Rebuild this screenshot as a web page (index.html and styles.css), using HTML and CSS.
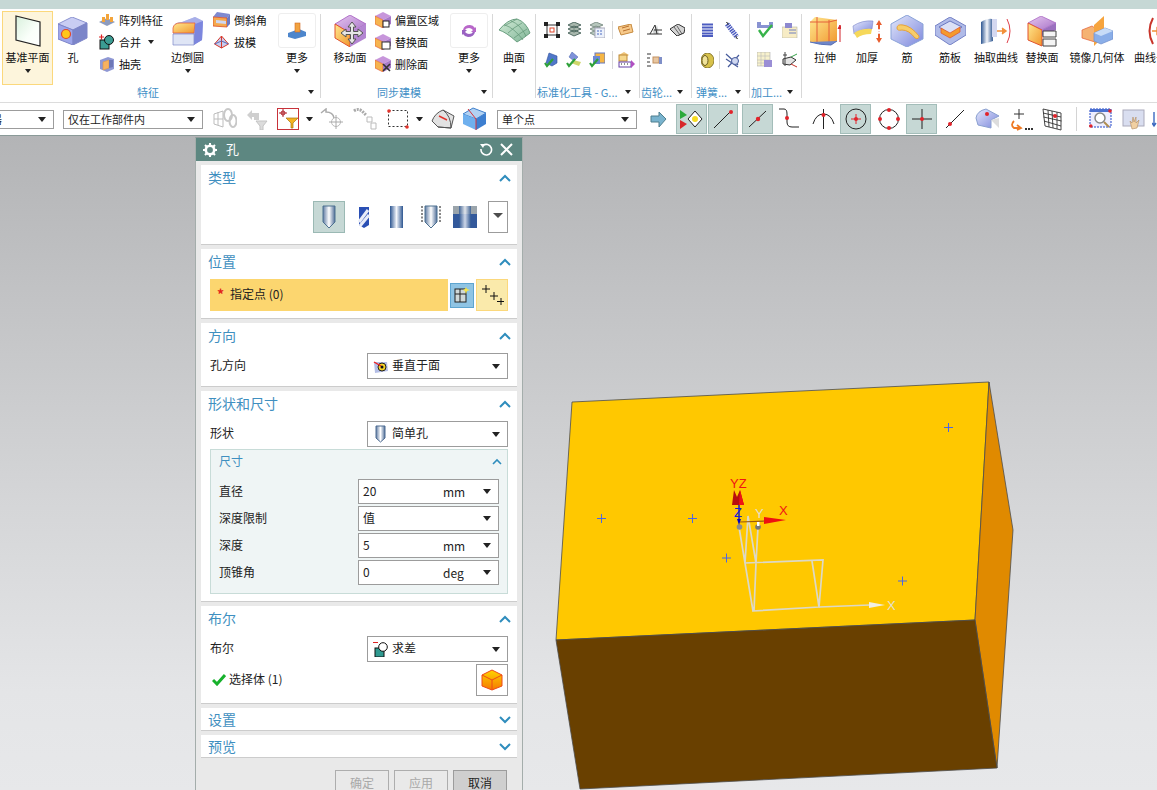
FILE: index.html
```html
<!DOCTYPE html>
<html lang="zh">
<head>
<meta charset="utf-8">
<title>孔</title>
<link rel="stylesheet" href="styles.css">
</head>
<body>
<svg class="defs" aria-hidden="true">
  <defs>
    <linearGradient id="gb" x1="0" y1="0" x2="1" y2="1"><stop offset="0" stop-color="#e4e8fb"/><stop offset="1" stop-color="#7b86dc"/></linearGradient>
    <linearGradient id="go" x1="0" y1="0" x2="1" y2="1"><stop offset="0" stop-color="#ffe88f"/><stop offset="1" stop-color="#f0962d"/></linearGradient>
    <linearGradient id="gd" x1="0" y1="0" x2="1" y2="1"><stop offset="0" stop-color="#d8f0dc"/><stop offset=".6" stop-color="#fafffa"/><stop offset="1" stop-color="#fff"/></linearGradient>
    <linearGradient id="gc" x1="0" y1="0" x2="1" y2="0"><stop offset="0" stop-color="#2c5590"/><stop offset=".5" stop-color="#f4f6fb"/><stop offset="1" stop-color="#2c5590"/></linearGradient>
    <linearGradient id="gs" x1="0" y1="0" x2="1" y2="0"><stop offset="0" stop-color="#5f7ba3"/><stop offset=".5" stop-color="#fff"/><stop offset="1" stop-color="#506e98"/></linearGradient>
    <linearGradient id="gf" x1="0" y1="0" x2="0" y2="1"><stop offset="0" stop-color="#ffd400"/><stop offset="1" stop-color="#f57a00"/></linearGradient>
    <linearGradient id="gv" x1="0" y1="0" x2="1" y2="1"><stop offset="0" stop-color="#e7c8ef"/><stop offset="1" stop-color="#a772c8"/></linearGradient>
    <linearGradient id="gsf" x1="0" y1="0" x2="1" y2="1"><stop offset="0" stop-color="#d4ecd8"/><stop offset="1" stop-color="#7fb596"/></linearGradient>
    <linearGradient id="gview" x1="0" y1="0" x2="0" y2="1"><stop offset="0" stop-color="#b3b4b6"/><stop offset=".55" stop-color="#d4d5d7"/><stop offset=".85" stop-color="#e4e5e7"/><stop offset="1" stop-color="#e7e8ea"/></linearGradient>
  </defs>
</svg>

<div class="strip"></div>

<header class="ribbon">
  <section class="group g-feature">
    <div class="group-body">
      <div class="big big-active w51">
        <div class="big-ico"><svg width="28" height="32" viewBox="0 0 28 32"><polygon points="2,1 26,7 26,31 2,25" fill="url(#gd)" stroke="#222" stroke-width="1.2"/></svg></div>
        <span class="big-label">基准平面</span><i class="tri"></i>
      </div>
      <div class="big w32 m4">
        <div class="big-ico"><svg width="30" height="28" viewBox="0 0 30 28"><polygon points="0,7 14,0 29,6 15,13" fill="#c9cdf3" stroke="#8b93d0"/><polygon points="0,7 15,13 15,28 0,22" fill="#9ea6ea" stroke="#7c84c8"/><polygon points="15,13 29,6 29,21 15,28" fill="#7b85c9" stroke="#7c84c8"/><circle cx="8" cy="17" r="4.5" fill="#ffc61c" stroke="#e2482d" stroke-width="1.2"/></svg></div>
        <span class="big-label">孔</span>
      </div>
      <div class="small-col w69 m10">
        <div class="small"><svg width="16" height="12" viewBox="0 0 16 12"><polygon points="0,8 8,4 16,8 8,12" fill="#8d9bbd"/><rect x="3" y="3" width="3" height="5" fill="#f3a43a"/><rect x="7" y="0" width="3" height="6" fill="#f3a43a"/><rect x="11" y="3" width="3" height="5" fill="#f3a43a"/></svg><span>阵列特征</span></div>
        <div class="small"><svg width="16" height="16" viewBox="0 0 16 16"><path d="M0 3h5M2.500 .5v5" stroke="#d22" stroke-width="1.200"/><rect x="1" y="6" width="9" height="9" fill="#3b9c93" stroke="#111"/><circle cx="10" cy="6" r="4.500" fill="#3b9c93" stroke="#111"/></svg><span>合并</span><i class="tri tri-inline"></i></div>
        <div class="small"><svg width="16" height="16" viewBox="0 0 16 16"><polygon points="1,4 9,1 15,3 15,13 8,16 1,13" fill="#8f98d4"/><polygon points="4,6 10,4 10,12 4,14" fill="#f7b260" stroke="#d94" stroke-width=".6"/><polygon points="10,4 14,4 14,11 10,12" fill="#6e77b6"/></svg><span>抽壳</span></div>
      </div>
      <div class="big w35 m2">
        <div class="big-ico"><svg width="32" height="30" viewBox="0 0 32 30"><path d="M1 12Q2 6 10 6L23 1l8 4-1 19-9 5H1z" fill="url(#gb)"/><path d="M1 12Q2 6 10 6L23 1l8 4-8 3Q8 8 8 8 2 8 1 12z" fill="#a8afe8"/><path d="M1 12Q2 7 8 7h15l-1 10H1z" fill="url(#go)" stroke="#e8603a" stroke-width=".8"/><path d="M23 8l8-3-1 19-8 5z" fill="#7c86de"/><path d="M1 18h21v11H1z" fill="#dfe5f5" stroke="#7d87c8" stroke-width=".7"/></svg></div>
        <span class="big-label">边倒圆</span><i class="tri"></i>
      </div>
      <div class="small-col w59 m8">
        <div class="small s2"><svg width="17" height="16" viewBox="0 0 17 16"><polygon points="0,5 4,0 17,2 14,6" fill="#7f8ad0"/><polygon points="0,5 14,6 14,15 0,14" fill="#f5a94e" stroke="#d94c2a" stroke-width=".8"/><polygon points="3,8 13,9 13,12 3,11" fill="#cfd7f2"/><polygon points="14,6 17,2 17,12 14,15" fill="#6d79c1"/></svg><span>倒斜角</span></div>
        <div class="small s2"><svg width="16" height="13" viewBox="0 0 16 13"><polygon points="8,0 15,8 8,12 1,8" fill="#c6cdf0" stroke="#d8392b"/><path d="M8 0v12" stroke="#d8392b"/><path d="M1 8l7-3 7 3" fill="none" stroke="#5a68b5"/></svg><span>拔模</span></div>
      </div>
      <div class="big w38 m6">
        <div class="more-box"><svg width="18" height="17" viewBox="0 0 18 17"><polygon points="0,11 11,7 18,10 18,14 7,17 0,15" fill="#4d86cc"/><rect x="7" y="1" width="5" height="9" fill="#f1a340" stroke="#d46a20" stroke-width=".6"/></svg></div>
        <span class="big-label">更多</span><i class="tri"></i>
      </div>
    </div>
    <div class="group-label center"><span>特征</span><i class="tri"></i></div>
  </section>
  <i class="sep"></i>

  <section class="group g-sync">
    <div class="group-body">
      <div class="big w34">
        <div class="big-ico"><svg width="33" height="32" viewBox="0 0 33 32"><polygon points="1,9 16,0 32,9 16,18" fill="url(#gv)" stroke="#a55ac0" stroke-width=".8"/><polygon points="1,9 16,18 16,32 1,23" fill="url(#go)" stroke="#e0522d"/><polygon points="16,18 32,9 32,23 16,32" fill="#b486d2"/><path d="M18 7l4 5h-2.500v4.500H24V14l5 4-5 4v-2.500h-4.500V24H22l-4 5-4-5h2.500v-4.500H12V22l-5-4 5-4v2.500h4.500V12H14z" fill="#e6e6e6" stroke="#555"/></svg></div>
        <span class="big-label">移动面</span>
      </div>
      <div class="small-col w70 m8">
        <div class="small"><svg width="16" height="16" viewBox="0 0 16 16"><polygon points="0,4 8,0 16,4 8,8" fill="#c796db"/><polygon points="0,4 8,8 8,16 0,12" fill="#f6b44f" stroke="#e0522d" stroke-width=".6"/><polygon points="8,8 16,4 16,12 8,16" fill="#a67ac8"/><rect x="8" y="9" width="6" height="6" fill="#fff" stroke="#222"/></svg><span>偏置区域</span></div>
        <div class="small"><svg width="16" height="16" viewBox="0 0 16 16"><polygon points="0,4 8,0 16,4 8,8" fill="#c796db"/><polygon points="0,4 8,8 8,16 0,12" fill="#f6b44f" stroke="#e0522d" stroke-width=".6"/><polygon points="8,8 16,4 16,12 8,16" fill="#a67ac8"/><rect x="7" y="8" width="8" height="7" fill="#fff" stroke="#333"/></svg><span>替换面</span></div>
        <div class="small"><svg width="16" height="16" viewBox="0 0 16 16"><polygon points="0,4 8,0 16,4 8,8" fill="#c796db"/><polygon points="0,4 8,8 8,16 0,12" fill="#f6b44f" stroke="#e0522d" stroke-width=".6"/><polygon points="8,8 16,4 16,12 8,16" fill="#a67ac8"/><path d="M8 8l7 7M15 8l-7 7" stroke="#333" stroke-width="1.600"/></svg><span>删除面</span></div>
      </div>
      <div class="big w38 m5">
        <div class="more-box"><svg width="16" height="14" viewBox="0 0 16 14"><path d="M2 6Q3 1 9 1q3 0 5 3l1-1v5H10l2-2Q10 4 8 4 5 4 4 6z" fill="#b867c9"/><path d="M14 8q-1 5-7 5-3 0-5-3l-1 1V6h5L4 8q2 2 4 2 3 0 4-2z" fill="#9a62c2"/></svg></div>
        <span class="big-label">更多</span><i class="tri"></i>
      </div>
    </div>
    <div class="group-label center2"><span>同步建模</span><i class="tri"></i></div>
  </section>
  <i class="sep"></i>

  <section class="group g-surface">
    <div class="group-body">
      <div class="big w42">
        <div class="big-ico"><svg width="33" height="26" viewBox="0 0 33 26"><path d="M1 12Q10 1 19 1q9 3 13 14-6 5-13 9Q8 14 1 12z" fill="url(#gsf)" stroke="#6a9f80"/><path d="M7 7q9 3 18 15M13 3q9 3 15 15M19 1q-9 5-13 7M24 5q-9 5-14 10M29 11q-8 5-13 9" fill="none" stroke="#5e9474" stroke-width=".7"/></svg></div>
        <span class="big-label">曲面</span><i class="tri"></i>
      </div>
    </div>
    <div class="group-label"></div>
  </section>
  <i class="sep"></i>

  <section class="group g-std">
    <div class="tool-grid grid-std">
      <svg width="16" height="16" viewBox="0 0 16 16"><rect x="3" y="3" width="10" height="10" fill="none" stroke="#333"/><rect x="6" y="6" width="4" height="4" fill="#fff" stroke="#e0462d"/><path d="M0 0h4v4H0zM12 0h4v4h-4zM0 12h4v4H0zM12 12h4v4h-4z" fill="#222"/></svg>
      <svg width="15" height="16" viewBox="0 0 15 16"><path d="M1 3l6-3 7 3-7 3zM1 7l6-3 7 3-7 3zM1 11l6-3 7 3-7 3z" fill="#a8b7ad" stroke="#35534a" stroke-width=".8"/></svg>
      <svg width="16" height="16" viewBox="0 0 16 16"><path d="M1 3l6-3 7 3-7 3zM1 7l6-3 7 3-7 3zM1 11l6-3 7 3-7 3z" fill="#b7c7bd" stroke="#6f8279" stroke-width=".8"/><rect x="6" y="6" width="10" height="10" fill="#ecf1fb" stroke="#aab"/><path d="M8 9h6M8 12h6" stroke="#4d6ac0" stroke-dasharray="2 1"/></svg>
      <i class="vsep"></i>
      <svg width="16" height="12" viewBox="0 0 16 12"><polygon points="0,3 13,0 15,8 3,11" fill="#f7c98a" stroke="#c68a3f"/><path d="M4 4l7-2M5 7l7-2" stroke="#b8702e"/></svg>
      <svg width="16" height="16" viewBox="0 0 16 16"><path d="M5 1l8 3v7l-5 3-6-3z" fill="#4f77c9" stroke="#2f4f9b" stroke-width=".6"/><path d="M1 11l2 3 6-7" fill="none" stroke="#2ea13a" stroke-width="2.200"/></svg>
      <svg width="16" height="16" viewBox="0 0 16 16"><path d="M6 0l6 5-4 4-5-4z" fill="#7f92da" stroke="#4560aa" stroke-width=".5"/><path d="M7 8l8 2-2 4-8-3z" fill="#cfd66c"/><path d="M1 11l2 3 6-7" fill="none" stroke="#2ea13a" stroke-width="2.200"/></svg>
      <svg width="16" height="16" viewBox="0 0 16 16"><rect x="6" y="1" width="10" height="10" fill="#f5b544" stroke="#6378c3"/><rect x="4" y="4" width="7" height="8" fill="#6c88d4"/><path d="M1 11l2 3 6-7" fill="none" stroke="#2ea13a" stroke-width="2.200"/></svg>
      <i class="vsep"></i>
      <svg width="17" height="16" viewBox="0 0 17 16"><path d="M1 3l5-3 5 3-5 3z" fill="#eec47a"/><rect x="1" y="3" width="8" height="6" fill="#f6d78c" stroke="#bd8a3a"/><rect x="1" y="10" width="12" height="5" fill="#fff" stroke="#6640a8"/><path d="M3 12h1M6 12h1M9 12h1" stroke="#222"/><polygon points="13,8 17,12 13,16" fill="#b14fc2"/></svg>
    </div>
    <div class="group-label"><span class="flex1">标准化工具 - G...</span><i class="tri"></i></div>
  </section>
  <i class="sep"></i>

  <section class="group g-gear">
    <div class="tool-grid grid-two">
      <svg width="16" height="12" viewBox="0 0 16 12"><path d="M5 6q4-1 5-5l2 9H7z" fill="#cfd2d2"/><path d="M0 10h15M3 10L8 1l2 9M7 6h8" fill="none" stroke="#333"/></svg>
      <svg width="16" height="12" viewBox="0 0 16 12"><path d="M1 5l8-5 7 4-1 5-7 3z" fill="#d4d4d4" stroke="#333"/><path d="M5 3l6 8M8 2l5 8" stroke="#333" stroke-width=".7"/></svg>
      <svg width="16" height="15" viewBox="0 0 16 15"><path d="M0 1h4M0 5h3M0 9h3M0 13h4" stroke="#333"/><rect x="6" y="4" width="6" height="6" fill="#e8c6a0" stroke="#c19060"/><rect x="12" y="4" width="3" height="7" fill="#7f8fc8"/></svg>
    </div>
    <div class="group-label"><span class="flex1">齿轮...</span><i class="tri"></i></div>
  </section>
  <i class="sep"></i>

  <section class="group g-spring">
    <div class="tool-grid grid-spring">
      <svg width="13" height="14" viewBox="0 0 13 14"><rect width="13" height="14" fill="#fff"/><path d="M1 1.500h11M1 4.500h11M1 7.500h11M1 10.500h11M1 13h11" stroke="#4c5cc0" stroke-width="1.800"/></svg>
      <i></i>
      <svg width="14" height="17" viewBox="0 0 14 17"><path d="M2 2l10 13" stroke="#4c5cc0" stroke-width="5" stroke-dasharray="1.500 .8"/><path d="M1 0q2 0 2 3M13 17q-2 0-2-3" fill="none" stroke="#333"/></svg>
      <svg width="13" height="15" viewBox="0 0 13 15"><ellipse cx="6.500" cy="7.500" rx="6.500" ry="7.500" fill="#d7c14a" stroke="#8a7a30"/><ellipse cx="4" cy="7.500" rx="3" ry="5" fill="#f0e39a" stroke="#6a5c20"/></svg>
      <i class="vsep short"></i>
      <svg width="15" height="15" viewBox="0 0 15 15"><path d="M1 1l12 11M1 6l12 8M3 14l11-12" stroke="#465a9b" stroke-width="1.200"/><circle cx="10" cy="8" r="3.500" fill="#cfd7f0" stroke="#465a9b"/></svg>
    </div>
    <div class="group-label"><span class="flex1">弹簧...</span><i class="tri"></i></div>
  </section>
  <i class="sep"></i>

  <section class="group g-mach">
    <div class="tool-grid grid-mach">
      <svg width="16" height="16" viewBox="0 0 16 16"><path d="M0 0h4v3h8V0h4v6H0z" fill="#8993d2"/><path d="M2 8l4 6 9-11" fill="none" stroke="#37b34a" stroke-width="2.400"/></svg>
      <svg width="16" height="16" viewBox="0 0 16 16"><rect x="0" y="5" width="15" height="11" fill="#f7ecc5" stroke="#b5b5a5" stroke-width=".6"/><rect x="3" y="1" width="7" height="5" fill="#8d89cf"/><path d="M7 8h7M7 11h7" stroke="#6e7fbf"/></svg>
      <svg width="16" height="16" viewBox="0 0 16 16"><rect width="13" height="14" fill="#f7f1cc" stroke="#aaa" stroke-width=".6"/><path d="M0 4h13M0 8h13M0 11h13M4 0v14M8 0v14" stroke="#bbb" stroke-width=".6"/><rect x="7" y="8" width="8" height="7" fill="#9a8ed5"/></svg>
      <svg width="16" height="16" viewBox="0 0 16 16"><path d="M1 7l8-2 5 3-6 5-7-1z" fill="#e4e4e4" stroke="#333"/><path d="M3 0v14M1 3h4" stroke="#444"/><path d="M9 5l6-3" stroke="#37a34a"/><path d="M9 12l6 3" stroke="#c8342a"/></svg>
    </div>
    <div class="group-label"><span class="flex1">加工...</span><i class="tri"></i></div>
  </section>
  <i class="sep"></i>

  <section class="group g-big">
    <div class="group-body">
      <div class="big w46">
        <div class="big-ico"><svg width="32" height="30" viewBox="0 0 32 30"><polygon points="1,6 6,1 28,4 28,25 22,29 1,26" fill="url(#go)"/><path d="M8 1v25M20 4v25M1 6h19l8-2" fill="none" stroke="#e4603a"/><path d="M1 26q10 3 21 3l6-4" fill="#6f86c8" stroke="#5670b8"/><path d="M31 26V11M29 13l2-4 1 4" stroke="#d2232a" fill="#d2232a"/></svg></div>
        <span class="big-label">拉伸</span>
      </div>
      <div class="big w38">
        <div class="big-ico"><svg width="30" height="26" viewBox="0 0 30 26"><path d="M1 8Q10 2 21 3l-1 8Q10 10 2 16z" fill="url(#gb)" stroke="#7a84c9" stroke-width=".6"/><path d="M2 15Q10 10 20 11l-1 5Q10 16 5 20z" fill="#f6d85a"/><path d="M27 2l3 5h-2v4h-2V7h-2zM27 25l3-5h-2v-4h-2v4h-2z" fill="#e85e2f"/><path d="M27 11v5" stroke="#e7a0a0" stroke-dasharray="1 1"/></svg></div>
        <span class="big-label">加厚</span>
      </div>
      <div class="big w42">
        <div class="big-ico"><svg width="34" height="32" viewBox="0 0 34 32"><polygon points="17,0 33,9 33,24 17,32 1,24 1,9" fill="url(#gb)" stroke="#8aa3d8"/><path d="M7 13q0-4 6-3 8 1 16 11 0 4-4 2-6-8-13-8-5 1-5-2z" fill="#f7cd6a" stroke="#e6a23a"/></svg></div>
        <span class="big-label">筋</span>
      </div>
      <div class="big w44">
        <div class="big-ico"><svg width="31" height="28" viewBox="0 0 31 28"><polygon points="15,0 31,9 31,18 15,28 0,18 0,9" fill="#b0bbe8" stroke="#7480c5"/><polygon points="15,4 27,10 15,17 4,10" fill="#dbe0f5" stroke="#6a78c0"/><path d="M6 11l9 5 10-6v5l-10 6-9-5z" fill="#f59a2c" stroke="#e0522d" stroke-width=".7"/></svg></div>
        <span class="big-label">筋板</span>
      </div>
      <div class="big w48">
        <div class="big-ico"><svg width="32" height="28" viewBox="0 0 32 28"><path d="M1 5Q8 1 12 2l1 22Q8 26 1 27z" fill="url(#gc)"/><rect x="12" y="2" width="5" height="18" fill="#d4d8f0"/><path d="M17 14h8M22 11l4 3-4 3" fill="#f2903a" stroke="#f2903a" stroke-width="1.500"/><path d="M27 2q6 12 0 24" fill="none" stroke="#df3f4a"/></svg></div>
        <span class="big-label">抽取曲线</span>
      </div>
      <div class="big w44">
        <div class="big-ico"><svg width="30" height="31" viewBox="0 0 30 31"><polygon points="1,7 14,0 29,7 15,14" fill="url(#gv)" stroke="#a45bbf" stroke-width=".7"/><polygon points="1,7 15,14 15,30 1,24" fill="url(#go)" stroke="#e2522d"/><polygon points="15,14 29,7 29,14 15,20" fill="#9b70bf"/><path d="M16 15h13v6H16zM16 23h13v7H16z" fill="#f4f4f4" stroke="#444"/></svg></div>
        <span class="big-label">替换面</span>
      </div>
      <div class="big w66">
        <div class="big-ico"><svg width="32" height="30" viewBox="0 0 32 30"><polygon points="1,14 11,10 14,12 14,26 1,22" fill="#f5b272" stroke="#e25c32" stroke-width=".7"/><polygon points="13,9 23,0 23,20 13,30" fill="#f6a43e"/><polygon points="13,17 24,12 32,15 32,23 20,28 13,25" fill="#8aaee8" stroke="#6f8dcc" stroke-width=".7"/><polygon points="13,17 24,12 32,15 20,20" fill="#c8dcf7"/></svg></div>
        <span class="big-label">镜像几何体</span>
      </div>
      <div class="big w52">
        <div class="big-ico"><svg width="22" height="28" viewBox="0 0 22 28"><path d="M8 1Q1 14 8 27" fill="none" stroke="#c8342a" stroke-width="2"/><path d="M7 14h8M12 11l4 3-4 3z" fill="#f2903a" stroke="#f2903a" stroke-width="1.400"/></svg></div>
        <span class="big-label">曲线长度</span>
      </div>
    </div>
  </section>
</header>

<nav class="toolbar">
  <div class="select s-first"><span class="grow">器</span><i class="caret"></i></div>
  <div class="select s-scope m9"><span class="grow">仅在工作部件内</span><i class="caret"></i></div>
  <svg class="m10" width="24" height="22" viewBox="0 0 24 22"><path d="M1 6l9-3v16l-9-3zM1 11h9M5 4v13" fill="none" stroke="#bdbdbd"/><ellipse cx="15" cy="7" rx="4" ry="6" fill="none" stroke="#c8c8c8" stroke-width="2"/><ellipse cx="20" cy="13" rx="3.500" ry="6" fill="none" stroke="#c8c8c8" stroke-width="2"/></svg>
  <svg class="m9" width="22" height="22" viewBox="0 0 22 22"><path d="M1 7l5-5v3h7v7H8V9H6v3z" fill="#cfcfcf"/><path d="M10 13h11l-4 5v4h-3v-4z" fill="#dcdcdc" stroke="#c4c4c4"/></svg>
  <div class="filter m9"><svg width="20" height="20" viewBox="0 0 20 20"><path d="M1 4h8M5 0v8" stroke="#b0232a"/><circle cx="5" cy="4" r="2" fill="none" stroke="#b0232a"/><path d="M8 9h12l-5 5v5h-2v-5z" fill="#f4b320" stroke="#a87412" stroke-width=".7"/></svg></div>
  <i class="caret m7"></i>
  <svg class="m7" width="24" height="22" viewBox="0 0 24 22"><path d="M1 5l5-4v3q7 0 8 6" fill="none" stroke="#aaa" stroke-width="1.500"/><circle cx="16" cy="14" r="4.500" fill="none" stroke="#bbb"/><path d="M16 7v14M9 14h14" stroke="#aaa"/></svg>
  <svg class="m8" width="26" height="22" viewBox="0 0 26 22"><path d="M2 3q4-3 8 0l4 4" fill="none" stroke="#aaa" stroke-width="3" stroke-dasharray="2 1"/><path d="M15 9h5v5h-5zM19 15h5v6h-5z" fill="none" stroke="#bbb"/></svg>
  <svg class="m9" width="22" height="22" viewBox="0 0 22 22"><rect x="1.500" y="2.500" width="19" height="16" fill="none" stroke="#333" stroke-dasharray="2 2"/><circle cx="2" cy="3" r="1.800" fill="#e2332c"/><circle cx="20" cy="19" r="1.800" fill="#e2332c"/></svg>
  <i class="caret m7"></i>
  <svg class="m8" width="24" height="22" viewBox="0 0 24 22"><path d="M1 13Q4 5 12 2l11 6-3 12-13-1z" fill="#e2e2e2" stroke="#555"/><path d="M1 13l6 6 13 1M12 2q8 6 8 18" fill="none" stroke="#555"/><path d="M8 8l8 4" stroke="#e2332c" stroke-width="1.500"/></svg>
  <svg class="m7" width="25" height="24" viewBox="0 0 25 24"><polygon points="1,7 11,1 24,6 14,12" fill="#b2d2f2" stroke="#3f80cc"/><polygon points="1,7 14,12 14,23 1,17" fill="#6fb0ee"/><polygon points="14,12 24,6 24,17 14,23" fill="#3d7fd0"/><path d="M6 2l8 10v11" fill="none" stroke="#d8343a"/></svg>
  <div class="select s-point m10"><span class="grow">单个点</span><i class="caret"></i></div>
  <svg class="m13" width="17" height="15" viewBox="0 0 17 15"><path d="M1 4h8V0l7 7-7 8v-5H1z" fill="#79b3ce" stroke="#4f7f8e"/></svg>
  <div class="on on31 m9"><svg width="26" height="20" viewBox="0 0 26 20"><polygon points="1,1 8,6 1,10" fill="#2aaa3c"/><polygon points="1,11 8,15 1,20" fill="#d8282a"/><polygon points="16,2 23,10 16,18 9,10" fill="#fff" stroke="#222"/><circle cx="16" cy="10" r="3" fill="#f6dc22"/></svg></div>
  <div class="on on30 m1"><svg width="22" height="20" viewBox="0 0 22 20"><path d="M2 19L19 2" stroke="#222"/><circle cx="19" cy="3" r="2" fill="#e2232a"/></svg></div>
  <div class="on on31 m4"><svg width="20" height="20" viewBox="0 0 20 20"><path d="M1 18L18 2" stroke="#222"/><circle cx="10" cy="10" r="2.200" fill="#e2232a"/></svg></div>
  <svg class="m5" width="22" height="24" viewBox="0 0 22 24"><path d="M1 2h5q3 0 3 5v8q0 5 5 5h7" fill="none" stroke="#222"/><circle cx="9" cy="11" r="2" fill="#e2232a"/></svg>
  <svg class="m12" width="23" height="22" viewBox="0 0 23 22"><path d="M1 16Q4 6 11.500 6T22 16M11.500 1v20" fill="none" stroke="#222"/><circle cx="11.500" cy="7" r="2" fill="#e2232a"/></svg>
  <div class="on on31 m5"><svg width="22" height="22" viewBox="0 0 22 22"><circle cx="11" cy="11" r="10" fill="none" stroke="#222"/><path d="M11 6v10M6 11h10" stroke="#e2232a"/><circle cx="11" cy="11" r="2" fill="#e2232a"/></svg></div>
  <svg class="m7" width="22" height="22" viewBox="0 0 22 22"><circle cx="11" cy="11" r="9.500" fill="none" stroke="#222"/><circle cx="11" cy="2" r="2" fill="#e2232a"/><circle cx="11" cy="20" r="2" fill="#e2232a"/><circle cx="2" cy="11" r="2" fill="#e2232a"/><circle cx="20" cy="11" r="2" fill="#e2232a"/></svg>
  <div class="on on31 m6"><svg width="20" height="20" viewBox="0 0 20 20"><path d="M10 0v20M0 10h20" stroke="#222"/><circle cx="10" cy="10" r="2" fill="#e2232a"/></svg></div>
  <svg class="m8" width="20" height="20" viewBox="0 0 20 20"><path d="M1 19L19 1" stroke="#222"/><circle cx="5" cy="15" r="2" fill="#e2232a"/></svg>
  <svg class="m10" width="25" height="22" viewBox="0 0 25 22"><path d="M1 10Q2 3 11 1l13 7-8 4v8L3 17z" fill="url(#gb)" stroke="#8aa0d0"/><path d="M16 12l8-2v10z" fill="#ddd"/><circle cx="12" cy="6" r="2" fill="#e2232a"/></svg>
  <svg class="m10" width="23" height="24" viewBox="0 0 23 24"><path d="M9 2v10M4 7h10" stroke="#333"/><path d="M4 14q-4 4 0 7h6M7 18l4 3-4 2" fill="none" stroke="#ee7a24" stroke-width="1.800"/><path d="M15 22h2M18 22h2M21 22h2" stroke="#333" stroke-width="2"/></svg>
  <svg class="m9" width="20" height="23" viewBox="0 0 20 23"><path d="M1 1l18 4v17L3 18zM1 5l18 4M1.500 9l18 4M2 13l17 5M6 2l1 17M10 3l1 17M15 4v17" fill="none" stroke="#333" stroke-width=".9"/><circle cx="13" cy="8" r="2" fill="#e2232a"/></svg>
  <i class="tb-sep m14"></i>
  <svg class="m12" width="23" height="22" viewBox="0 0 23 22"><rect x="1" y="1" width="21" height="18" fill="#eef" stroke="#2448c8" stroke-dasharray="2 1"/><rect x="1" y="1" width="21" height="3" fill="#4a6fd0"/><circle cx="11" cy="10" r="5" fill="#fff" stroke="#888" stroke-width="1.500"/><path d="M15 14l5 5" stroke="#b08e50" stroke-width="2"/><circle cx="21" cy="3" r="1.800" fill="#e2232a"/><circle cx="1.800" cy="18" r="1.800" fill="#e2232a"/></svg>
  <svg class="m10" width="24" height="22" viewBox="0 0 24 22"><rect x="1" y="2" width="21" height="16" fill="#d9def0" stroke="#aab"/><path d="M10 21l-2-8 2 2 1-6 1 5 2-5v6l3-3-2 8z" fill="#f1d0a2" stroke="#b08a60" stroke-width=".6"/></svg>
  <svg class="m6" width="10" height="22" viewBox="0 0 10 22"><path d="M2 4v14M0 15l2 3 2-3" fill="none" stroke="#3d6ac0" stroke-width="1.400"/></svg>
</nav>

<main class="viewport">
  <svg class="scene" viewBox="0 136 1157 654" preserveAspectRatio="none" aria-hidden="true">
    <rect x="0" y="136" width="1157" height="654" fill="url(#gview)"/>
    <polygon points="572,402 989,382 975,620 556,640" fill="#ffc800" stroke="#4d4d4d" stroke-width=".8"/>
    <polygon points="989,382 1013,530 997,768 975,620" fill="#e08a00" stroke="#4d4d4d" stroke-width=".8"/>
    <polygon points="556,640 975,620 997,768 580,789" fill="#694000" stroke="#4d4d4d" stroke-width=".8"/>
    <g stroke="#4a66e8" stroke-width="1" fill="none">
      <path d="M597 518.500h9M601.500 514v9"/>
      <path d="M688 518.500h9M692.500 514v9"/>
      <path d="M722 558h9M726.500 553.500v9"/>
      <path d="M898 581h9M902.500 576.500v9"/>
      <path d="M944 427.500h9M948.500 423v9"/>
    </g>
    <g fill="none" stroke="#dcd8c6" stroke-width="1.700">
      <path d="M753 611L819 607 823 560 745 563zM819 607L812 561M754 611L756 563"/>
      <path d="M745 563L739 527M745 563L748 516 756 563 758 527"/>
      <path d="M819 607L870 605"/>
    </g>
    <polygon points="869,602 885,605 869,608" fill="#f1efe4"/>
    <circle cx="739.500" cy="527" r="2.800" fill="#8c8c8c"/>
    <circle cx="758" cy="527" r="2.800" fill="#777"/>
    <rect x="757" y="521" width="2.500" height="5" fill="#fff"/>
    <path d="M740 522L766 521" stroke="#9a5a10" stroke-width="1.200"/>
    <polygon points="764,517 786,520 764,524" fill="#ee1010"/>
    <polygon points="732,505 734,490 737,497 740,490 744,505" fill="#b80e0e"/>
    <polygon points="739,505 740,490 744,505" fill="#f01414"/>
    <path d="M739 505V522" stroke="#1a1ac8" stroke-width="1.500"/>
    <polygon points="737,519 741,519 739,525" fill="#0000c8"/>
    <text class="axis red" x="730" y="488">YZ</text>
    <text class="axis blue" x="734" y="517">Z</text>
    <text class="axis pale" x="755" y="518">Y</text>
    <text class="axis red" x="779" y="515">X</text>
    <text class="axis pale" x="887" y="610">X</text>
  </svg>

  <aside class="dialog">
    <div class="dlg-head">
      <svg width="14" height="14" viewBox="0 0 14 14"><circle cx="7" cy="7" r="4.200" fill="none" stroke="#fff" stroke-width="2.600"/><path d="M7 0v3M7 11v3M0 7h3M11 7h3M2 2l2 2M10 10l2 2M2 12l2-2M10 4l2-2" stroke="#fff" stroke-width="2"/></svg>
      <span class="dlg-title">孔</span>
      <svg class="dlg-reset" width="14" height="14" viewBox="0 0 14 14"><path d="M4 2.500A5.300 5.300 0 1 1 2 6" fill="none" stroke="#fff" stroke-width="1.600"/><path d="M1 1l5 0-2 4z" fill="#fff"/></svg>
      <svg class="dlg-close" width="13" height="13" viewBox="0 0 13 13"><path d="M1 1l11 11M12 1L1 12" stroke="#fff" stroke-width="2"/></svg>
    </div>
    <div class="dlg-body">
      <section class="panel p-type">
        <div class="panel-head"><h2>类型</h2><svg class="chev" width="12" height="8" viewBox="0 0 12 8"><path d="M1 7l5-5 5 5" fill="none" stroke="#2f8dbd" stroke-width="2"/></svg></div>
        <div class="type-row">
          <div class="type-on"><svg width="14" height="24" viewBox="0 0 14 24"><path d="M1 1h12v16l-6 6-6-6z" fill="url(#gs)" stroke="#4d7090"/></svg></div>
          <svg class="t1" width="12" height="22" viewBox="0 0 12 22"><path d="M1 1h10v18l-5 3-5-3z" fill="#2a4fb4"/><path d="M1 16L10 4M2 20L11 9" stroke="#e8ecf8" stroke-width="3"/></svg>
          <svg class="t2" width="13" height="22" viewBox="0 0 13 22"><rect width="13" height="22" fill="url(#gc)"/></svg>
          <svg class="t3" width="20" height="24" viewBox="0 0 20 24"><path d="M4 1h12v16l-6 6-6-6z" fill="url(#gs)" stroke="#4d7090"/><path d="M1 1v17M19 1v17" stroke="#111" stroke-dasharray="2 1.500"/></svg>
          <svg class="t4" width="24" height="22" viewBox="0 0 24 22"><rect width="24" height="22" fill="#9aa4ab"/><rect y="8" width="24" height="14" fill="#33599b"/><rect x="6" width="12" height="22" fill="url(#gc)" opacity=".8"/></svg>
          <div class="type-more"><i class="caret caret-big"></i></div>
        </div>
      </section>

      <section class="panel p-pos">
        <div class="panel-head"><h2>位置</h2><svg class="chev" width="12" height="8" viewBox="0 0 12 8"><path d="M1 7l5-5 5 5" fill="none" stroke="#2f8dbd" stroke-width="2"/></svg></div>
        <div class="pos-row">
          <div class="pos-field"><b class="star">*</b><span>指定点 (0)</span></div>
          <div class="pos-ico"><svg width="16" height="18" viewBox="0 0 16 18"><rect x="1" y="3" width="11" height="13" fill="#cfd8d8" stroke="#222"/><path d="M1 8h11M6 3v13" stroke="#222"/><path d="M12 1l1 2 3 1-3 1-1 3-1-3-2-1 2-1z" fill="#f6e64a"/></svg></div>
          <div class="pos-plus"><svg width="24" height="22" viewBox="0 0 24 22"><path d="M6 1v8M2 5h8M14 8v8M10 12h8M21 14v7M17 17.500h7" stroke="#111"/></svg></div>
        </div>
      </section>

      <section class="panel p-dir">
        <div class="panel-head"><h2>方向</h2><svg class="chev" width="12" height="8" viewBox="0 0 12 8"><path d="M1 7l5-5 5 5" fill="none" stroke="#2f8dbd" stroke-width="2"/></svg></div>
        <div class="form-row"><label>孔方向</label>
          <div class="select s-form"><svg width="16" height="13" viewBox="0 0 16 13"><path d="M1 2l13 0 1 9-13 2z" fill="#b4bee6"/><circle cx="9" cy="7" r="4" fill="#f5d42a" stroke="#222"/><circle cx="9" cy="7" r="1.500" fill="#111"/><path d="M1 2l7 4" stroke="#e22" stroke-width="1.400"/></svg><span class="grow">垂直于面</span><i class="caret"></i></div>
        </div>
      </section>

      <section class="panel p-shape">
        <div class="panel-head"><h2>形状和尺寸</h2><svg class="chev" width="12" height="8" viewBox="0 0 12 8"><path d="M1 7l5-5 5 5" fill="none" stroke="#2f8dbd" stroke-width="2"/></svg></div>
        <div class="form-row"><label>形状</label>
          <div class="select s-form"><svg width="16" height="18" viewBox="0 0 16 18"><path d="M3 1h9v12l-4.500 4L3 13z" fill="url(#gs)" stroke="#4d6a90"/></svg><span class="grow">简单孔</span><i class="caret"></i></div>
        </div>
        <div class="subpanel">
          <div class="sub-head"><h3>尺寸</h3><svg width="10" height="7" viewBox="0 0 10 7"><path d="M1 6l4-4 4 4" fill="none" stroke="#2f8dbd" stroke-width="1.600"/></svg></div>
          <div class="dim-row"><label>直径</label><div class="select s-dim"><span class="grow">20</span><span class="unit">mm</span><i class="caret"></i></div></div>
          <div class="dim-row"><label>深度限制</label><div class="select s-dim"><span class="grow">值</span><i class="caret"></i></div></div>
          <div class="dim-row"><label>深度</label><div class="select s-dim"><span class="grow">5</span><span class="unit">mm</span><i class="caret"></i></div></div>
          <div class="dim-row"><label>顶锥角</label><div class="select s-dim"><span class="grow">0</span><span class="unit">deg</span><i class="caret"></i></div></div>
        </div>
      </section>

      <section class="panel p-bool">
        <div class="panel-head"><h2>布尔</h2><svg class="chev" width="12" height="8" viewBox="0 0 12 8"><path d="M1 7l5-5 5 5" fill="none" stroke="#2f8dbd" stroke-width="2"/></svg></div>
        <div class="form-row"><label>布尔</label>
          <div class="select s-form"><svg width="16" height="15" viewBox="0 0 16 15"><path d="M0 .5h5" stroke="#d22"/><rect x="2" y="6" width="9" height="9" fill="#2f9a90" stroke="#111"/><circle cx="10" cy="5" r="4.300" fill="#fff" stroke="#111"/></svg><span class="grow">求差</span><i class="caret"></i></div>
        </div>
        <div class="pick-row">
          <svg width="14" height="12" viewBox="0 0 14 12"><path d="M1 6l4 4 8-9" fill="none" stroke="#17b12c" stroke-width="3"/></svg>
          <span class="pick-text">选择体 (1)</span>
          <div class="pick-btn"><svg width="22" height="22" viewBox="0 0 22 22"><polygon points="11,1 21,6 21,17 11,21 1,17 1,6" fill="url(#gf)" stroke="#ee4a18"/><path d="M1 6l10 5 10-5M11 11v10" fill="none" stroke="#ee4a18"/></svg></div>
        </div>
      </section>

      <section class="panel p-closed">
        <div class="panel-head"><h2>设置</h2><svg class="chev" width="12" height="8" viewBox="0 0 12 8"><path d="M1 1l5 5 5-5" fill="none" stroke="#2f8dbd" stroke-width="2"/></svg></div>
      </section>
      <section class="panel p-closed">
        <div class="panel-head"><h2>预览</h2><svg class="chev" width="12" height="8" viewBox="0 0 12 8"><path d="M1 1l5 5 5-5" fill="none" stroke="#2f8dbd" stroke-width="2"/></svg></div>
      </section>

      <div class="dlg-foot">
        <button class="btn" disabled>确定</button>
        <button class="btn" disabled>应用</button>
        <button class="btn btn-main">取消</button>
      </div>
    </div>
  </aside>
</main>
</body>
</html>
```

FILE: styles.css
```css
* { box-sizing: border-box; }
html, body { margin: 0; padding: 0; height: 100%; overflow: hidden; }
body {
  width: 1157px; height: 790px; display: flex; flex-direction: column;
  font-family: "Noto Sans CJK SC", "Liberation Sans", sans-serif;
  font-size: 12px; color: #222; background: #fff;
}
svg { display: block; flex: none; }
.defs { width: 0; height: 0; }
.strip { height: 9px; background: #c6d8d5; flex: none; }

/* ribbon */
.ribbon { display: flex; height: 94px; flex: none; background: #fff; border-bottom: 1px solid #dcdcdc; overflow: hidden; font-size: 11px; }
.group { display: flex; flex-direction: column; height: 93px; flex: none; }
.group-body { display: flex; height: 77px; flex: none; }
.sep { width: 1px; flex: none; margin: 5px 0 4px; background: #d8d8d8; }
.g-feature { width: 320px; }
.g-feature .group-body { padding-left: 2px; }
.g-sync { width: 171px; }
.g-sync .group-body { padding-left: 12px; }
.g-surface { width: 42px; }
.g-std { width: 103px; }
.g-gear { width: 51px; }
.g-spring { width: 57px; }
.g-mach { width: 51px; }
.g-big { flex: 1; min-width: 0; }

.big { display: flex; flex-direction: column; align-items: center; height: 74px; margin-top: 2px; flex: none; white-space: nowrap; }
.big-active { background: #fdf5dc; border: 1px solid #fbd87c; }
.big-ico { height: 38px; margin-top: 1px; display: flex; align-items: center; justify-content: center; flex: none; }
.big-active .big-ico { margin-top: 0; }
.big-label { line-height: 14px; height: 14px; font-size: 11px; color: #111; }
.more-box { width: 38px; height: 35px; margin-top: 2px; margin-bottom: 2px; border: 1px solid #eee; border-radius: 3px; display: flex; align-items: center; justify-content: center; }
.tri { display: block; width: 0; height: 0; border-left: 3.5px solid transparent; border-right: 3.5px solid transparent; border-top: 4px solid #222; margin-top: 5px; flex: none; }
.tri-inline { margin: 0 0 0 7px; }

.w32 { width: 32px; } .w34 { width: 34px; } .w35 { width: 35px; } .w38 { width: 38px; }
.w42 { width: 42px; } .w44 { width: 44px; } .w46 { width: 46px; } .w48 { width: 48px; } .w51 { width: 51px; } .w52 { width: 52px; }
.w59 { width: 59px; } .w66 { width: 66px; } .w69 { width: 69px; } .w70 { width: 70px; }
.m1 { margin-left: 1px; } .m2 { margin-left: 2px; } .m4 { margin-left: 4px; } .m5 { margin-left: 5px; } .m6 { margin-left: 6px; }
.m7 { margin-left: 7px; } .m8 { margin-left: 8px; } .m9 { margin-left: 9px; } .m10 { margin-left: 10px; }
.m12 { margin-left: 12px; } .m13 { margin-left: 13px; } .m14 { margin-left: 14px; }

.small-col { display: flex; flex-direction: column; flex: none; }
.small { display: flex; align-items: center; height: 22px; white-space: nowrap; color: #111; }
.small > svg { width: 16px; margin-right: 4px; }
.small.s2 > svg { width: 17px; margin-right: 4px; }

.group-label { height: 16px; padding-bottom: 4px; display: flex; align-items: center; font-size: 11px; color: #3f8fc6; white-space: nowrap; }
.group-label .tri { margin-top: 0; }
.group-label.center { padding-left: 137px; }
.group-label.center .tri { margin-left: 149px; }
.group-label.center2 { padding-left: 56px; }
.group-label.center2 .tri { margin-left: 60px; }
.g-std .group-label { padding-left: 1px; padding-right: 8px; }
.g-gear .group-label { padding-left: 1px; padding-right: 8px; }
.g-spring .group-label { padding-left: 4px; padding-right: 8px; }
.g-mach .group-label { padding-left: 1px; padding-right: 8px; }
.flex1 { flex: 1; }

.tool-grid { display: grid; height: 77px; padding-top: 11px; grid-auto-rows: 20px; row-gap: 10px; justify-items: center; align-items: center; }
.grid-std { padding-left: 5px; grid-template-columns: 22px 22px 24px 6px 22px; }
.grid-two { padding-left: 4px; grid-template-columns: 22px 22px; }
.grid-spring { padding-left: 4px; grid-template-columns: 22px 3px 22px; }
.grid-mach { padding-left: 4px; grid-template-columns: 22px 3px 22px; }
.grid-mach svg:nth-child(even) { grid-column: 3; }
.vsep { width: 1px; height: 18px; background: #d8d8d8; display: block; }

/* toolbar */
.toolbar { height: 32px; flex: none; display: flex; align-items: center; background: #fff; white-space: nowrap; overflow: hidden; }
.select { display: flex; align-items: center; background: #fff; border: 1px solid #9c9c9c; color: #222; font-size: 12px; padding: 0 7px 0 4px; flex: none; }
.grow { flex: 1; min-width: 0; }
.caret { display: block; width: 0; height: 0; border-left: 4.5px solid transparent; border-right: 4.5px solid transparent; border-top: 5px solid #222; flex: none; }
.caret-big { border-left-width: 5.5px; border-right-width: 5.5px; border-top-width: 5px; border-top-color: #4d4d4d; }
.s-first { width: 64px; height: 19px; margin-left: -10px; font-size: 11px; padding-left: 0; }
.s-scope { width: 140px; height: 19px; font-size: 11px; }
.s-point { width: 140px; height: 19px; font-size: 11px; }
.filter { width: 22px; height: 22px; border: 1px solid #c8323a; display: flex; align-items: center; justify-content: center; }
.on { height: 30px; background: #c6d8d5; border: 1px solid #a3bdb9; display: flex; align-items: center; justify-content: center; flex: none; }
.on31 { width: 31px; }
.on30 { width: 30px; }
.toolbar > .caret { border-left-width: 3.5px; border-right-width: 3.5px; border-top-width: 4px; width: 7px; }
.tb-sep { width: 1px; height: 24px; background: #d4d4d4; display: block; flex: none; }

/* viewport */
.viewport { position: relative; flex: 1; min-height: 0; overflow: hidden; border-top: 1px solid #8a9a98; }
.scene { width: 100%; height: 100%; }
.axis { font-family: "Liberation Sans", sans-serif; font-size: 13px; }
.red { fill: #f01414; }
.blue { fill: #1a1ad8; }
.pale { fill: #e4e0d0; }

/* dialog */
.dialog { position: absolute; left: 195px; top: 1px; width: 328px; height: 653px; background: #e9e9e9; border-left: 1px solid #a4adab; border-right: 1px solid #a4adab; border-top: 1px solid #8c9a98; overflow: hidden; }
.dlg-head { height: 23px; background: #5d8781; display: flex; align-items: center; padding: 0 9px 0 7px; }
.dlg-title { color: #fff; font-size: 13px; margin-left: 9px; flex: 1; padding-bottom: 2px; }
.dlg-close { margin-left: 7px; }
.dlg-body { padding: 4px 5px 0; display: flex; flex-direction: column; gap: 4px; }
.panel { background: #fff; border-bottom: 1px solid #cccccc; padding: 0 9px; }
.p-type { height: 80px; }
.p-pos { height: 70px; }
.p-dir { height: 64px; }
.p-shape { height: 211px; }
.p-bool { height: 98px; }
.p-closed { height: 23px; }
.panel-head { height: 26px; margin: 0 -3px 0 -2px; display: flex; align-items: center; justify-content: space-between; }
.p-closed .panel-head { height: 23px; }
.panel-head h2 { margin: 0; font-size: 14px; font-weight: 400; color: #3f8fc0; padding-bottom: 2px; }
.chev { margin-right: 0; }

.type-row { display: flex; align-items: center; height: 32px; margin-top: 10px; }
.type-on { width: 32px; height: 32px; margin-left: 103px; background: #c6d8d5; border: 1px solid #9bb9b4; display: flex; align-items: center; justify-content: center; flex: none; }
.t1 { margin-left: 13px; } .t2 { margin-left: 20px; } .t3 { margin-left: 18px; } .t4 { margin-left: 12px; }
.type-more { width: 20px; height: 32px; margin-left: 11px; border: 1px solid #9c9c9c; display: flex; align-items: center; justify-content: center; padding-bottom: 3px; }

.pos-row { display: flex; height: 32px; margin-top: 4px; align-items: center; }
.pos-field { width: 238px; height: 32px; background: #fcd66f; display: flex; align-items: center; padding-left: 7px; }
.pos-field span { padding-bottom: 4px; }
.star { color: #e2231a; font-weight: 700; font-size: 14px; line-height: 14px; width: 13px; padding-bottom: 2px; }
.pos-ico { width: 24px; height: 25px; margin-left: 2px; background: #8fc4e4; border: 1px solid #5ea5d0; display: flex; align-items: center; justify-content: center; }
.pos-plus { width: 32px; height: 32px; margin-left: 2px; background: #faeaab; border: 1px solid #fbd87c; display: flex; align-items: center; justify-content: center; }

.form-row { display: flex; justify-content: space-between; align-items: center; height: 26px; margin-top: 4px; }
.form-row label { color: #222; padding-bottom: 4px; }
.s-form { width: 141px; height: 26px; padding-left: 5px; }
.s-form > svg { margin-right: 3px; }
.s-form .grow { padding-bottom: 4px; }

.subpanel { height: 145px; margin-top: 2px; background: #eff5f5; border: 1px solid #c8dcd8; padding: 0 8px; }
.sub-head { height: 24px; display: flex; align-items: center; justify-content: space-between; margin: 0 -3px 0 0; padding-bottom: 2px; }
.sub-head h3 { margin: 0; font-size: 12px; font-weight: 400; color: #3f8fc0; padding-bottom: 2px; }
.dim-row { display: flex; justify-content: space-between; align-items: center; height: 25px; margin-bottom: 2px; }
.dim-row label { padding-bottom: 2px; }
.sub-head + .dim-row { margin-top: 5px; }
.s-dim { width: 141px; height: 25px; }
.s-dim .grow { padding-bottom: 2px; }
.unit { margin-right: 19px; width: 21px; padding-bottom: 1px; }

.pick-row { display: flex; align-items: center; height: 32px; margin-top: 2px; padding-left: 2px; }
.pick-text { flex: 1; margin-left: 3px; padding-bottom: 4px; }
.pick-btn { width: 32px; height: 32px; border: 1px solid #9c9c9c; display: flex; align-items: center; justify-content: center; }

.dlg-foot { display: flex; justify-content: flex-end; gap: 5px; padding: 8px 10px 0 0; }
.btn { width: 54px; height: 26px; font: inherit; font-size: 12px; background: #e9e9e9; border: 1px solid #adadad; color: #a8a8a8; padding: 0 0 2px; }
.btn-main { background: #cfcfcf; border-color: #9c9c9c; color: #222; }
```
